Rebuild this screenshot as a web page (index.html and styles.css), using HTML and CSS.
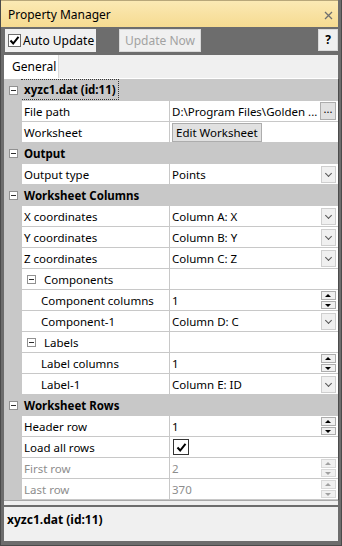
FILE: index.html
```html
<!DOCTYPE html>
<html>
<head>
<meta charset="utf-8">
<link rel="stylesheet" href="styles.css">
</head>
<body>
<div class="win">
  <div class="titlebar">
    <span class="title">Property Manager</span>
    <svg class="close" width="9" height="9" viewBox="0 0 9 9"><path d="M1 1L8 8M8 1L1 8" stroke="#6f6f6f" stroke-width="1.3"/></svg>
  </div>
  <div class="toolbar">
    <div class="tbtn auto"><span class="cb"><svg width="11" height="11" viewBox="0 0 11 11"><path d="M1.5 5.5L4.2 8.5L9.5 1.8" fill="none" stroke="#000" stroke-width="2"/></svg></span><span>Auto Update</span></div>
    <div class="tbtn disabled">Update Now</div>
    <div class="fill"></div>
    <div class="tbtn help">?</div>
  </div>
  <div class="tabs"><div class="tab">General</div></div>
  <div class="grid">
    <div class="row cat"><div class="gut"><span class="box"></span></div><div class="catlabel"><span class="focus">xyzc1.dat (id:11)</span></div></div>
    <div class="row"><div class="gut"></div><div class="lab">File path</div><div class="val"><span class="txt">D:\Program Files\Golden ...</span><span class="dots">...</span></div></div>
    <div class="row"><div class="gut"></div><div class="lab">Worksheet</div><div class="val"><span class="btn">Edit Worksheet</span></div></div>
    <div class="row cat"><div class="gut"><span class="box"></span></div><div class="catlabel">Output</div></div>
    <div class="row"><div class="gut"></div><div class="lab">Output type</div><div class="val"><span class="txt">Points</span><span class="dd"></span></div></div>
    <div class="row cat"><div class="gut"><span class="box"></span></div><div class="catlabel">Worksheet Columns</div></div>
    <div class="row"><div class="gut"></div><div class="lab">X coordinates</div><div class="val"><span class="txt">Column A: X</span><span class="dd"></span></div></div>
    <div class="row"><div class="gut"></div><div class="lab">Y coordinates</div><div class="val"><span class="txt">Column B: Y</span><span class="dd"></span></div></div>
    <div class="row"><div class="gut"></div><div class="lab">Z coordinates</div><div class="val"><span class="txt">Column C: Z</span><span class="dd"></span></div></div>
    <div class="row sub"><div class="gut"></div><div class="lab"><span class="box"></span>Components</div><div class="val"></div></div>
    <div class="row"><div class="gut"></div><div class="lab child">Component columns</div><div class="val"><span class="txt">1</span><span class="spin"><i class="up"></i><i class="dn"></i></span></div></div>
    <div class="row"><div class="gut"></div><div class="lab child">Component-1</div><div class="val"><span class="txt">Column D: C</span><span class="dd"></span></div></div>
    <div class="row sub"><div class="gut"></div><div class="lab"><span class="box"></span>Labels</div><div class="val"></div></div>
    <div class="row"><div class="gut"></div><div class="lab child">Label columns</div><div class="val"><span class="txt">1</span><span class="spin"><i class="up"></i><i class="dn"></i></span></div></div>
    <div class="row"><div class="gut"></div><div class="lab child">Label-1</div><div class="val"><span class="txt">Column E: ID</span><span class="dd"></span></div></div>
    <div class="row cat"><div class="gut"><span class="box"></span></div><div class="catlabel">Worksheet Rows</div></div>
    <div class="row"><div class="gut"></div><div class="lab">Header row</div><div class="val"><span class="txt">1</span><span class="spin"><i class="up"></i><i class="dn"></i></span></div></div>
    <div class="row"><div class="gut"></div><div class="lab">Load all rows</div><div class="val"><span class="cb2"><svg width="11" height="11" viewBox="0 0 11 11"><path d="M1.5 5.5L4.2 8.5L9.5 1.8" fill="none" stroke="#000" stroke-width="2"/></svg></span></div></div>
    <div class="row dis"><div class="gut"></div><div class="lab">First row</div><div class="val"><span class="txt">2</span><span class="spin off"><i class="up"></i><i class="dn"></i></span></div></div>
    <div class="row dis"><div class="gut"></div><div class="lab">Last row</div><div class="val"><span class="txt">370</span><span class="spin off"><i class="up"></i><i class="dn"></i></span></div></div>
  </div>
  <div class="splitter"></div>
  <div class="helppanel">xyzc1.dat (id:11)</div>
</div>
</body>
</html>
```
FILE: styles.css
```css
html, body {
  margin: 0;
  padding: 0;
  background: #6d6d6d;
}
body {
  font-family: "Noto Sans", "DejaVu Sans", sans-serif;
  font-size: 11.5px;
  color: #000;
}
.win {
  width: 342px;
  height: 546px;
  box-sizing: border-box;
  background: #6d6d6d;
  border: 1px solid #4a4a4a;
  border-top: none;
  display: flex;
  flex-direction: column;
  padding: 0 3px 4px 3px;
}
.titlebar {
  height: 27px;
  margin: 0 0 0 -3px;
  background: linear-gradient(#fbe9b4, #f6db91);
  display: flex;
  align-items: center;
  justify-content: space-between;
  padding: 0 5px 0 7px;
  border-top: 1px solid #b8a77a;
  box-sizing: border-box;
  font-size: 12px;
}
.title { line-height: 14px; padding-top: 1px; }
.close { margin-top: 3px; }
.toolbar {
  height: 28px;
  display: flex;
  align-items: flex-start;
  padding-top: 2px;
  box-sizing: border-box;
  font-size: 12px;
}
.tbtn {
  height: 23px;
  box-sizing: border-box;
  background: #f0f0f0;
  display: flex;
  align-items: center;
  line-height: 14px;
}
.auto {
  width: 91px;
  margin-left: 1px;
  padding-left: 3px;
}
.cb {
  width: 13px;
  height: 13px;
  box-sizing: border-box;
  border: 1px solid #6c6c6c;
  background: #fff;
  display: flex;
  align-items: center;
  justify-content: center;
  margin-right: 2px;
}
.disabled {
  margin-left: 23px;
  width: 82px;
  border: 1px solid #d9d9d9;
  color: #a2a2a2;
  justify-content: center;
}
.fill { flex: 1; }
.help {
  width: 20px;
  height: 22px;
  border: 1px solid #dadada;
  justify-content: center;
  font-weight: bold;
}
.tabs {
  height: 24px;
  background: #f0f0f0;
  border-bottom: 1px solid #ffffff;
  box-sizing: border-box;
  display: flex;
  font-size: 12px;
}
.tab {
  width: 55px;
  background: #fff;
  border-right: 1px solid #d9d9d9;
  box-sizing: border-box;
  padding-left: 8px;
  line-height: 23px;
}
.grid {
  background: #c8c8c8;
  padding-top: 1px;
  border-right: 1px solid #4b4b4b;
  margin-right: -1px;
}
.row {
  display: grid;
  grid-template-columns: 18px 147px 1fr;
  height: 20px;
  border-bottom: 1px solid #c8c8c8;
  line-height: 20px;
  white-space: nowrap;
}
.gut {
  background: #c8c8c8;
  position: relative;
}
.gut .box {
  position: absolute;
  left: 5px;
  top: 6px;
}
.box {
  display: inline-block;
  width: 9px;
  height: 9px;
  box-sizing: border-box;
  border: 1px solid #919191;
  background: #fff;
  position: relative;
}
.box::after {
  content: "";
  position: absolute;
  left: 1px;
  top: 3px;
  width: 5px;
  height: 1px;
  background: #2e2e2e;
}
.cat .catlabel {
  grid-column: 2 / 4;
  font-weight: bold;
  padding-left: 2px;
  padding-top: 1px;
  line-height: 19px;
}
.focus {
  outline: 1px dotted #333;
  margin-left: -2px;
  margin-top: -1px;
  padding: 1px 2px 0 2px;
  display: inline-block;
  height: 18px;
  line-height: 18px;
  vertical-align: top;
}
.lab {
  background: #fff;
  padding-left: 2px;
  padding-top: 1px;
  overflow: hidden;
  display: flex;
  align-items: center;
}
.lab.child { padding-left: 19px; }
.sub .lab .box { margin: 0 8px 0 3px; }
.val {
  background: #fff;
  border-left: 1px solid #c8c8c8;
  padding-left: 2px;
  display: flex;
  align-items: center;
  position: relative;
  overflow: hidden;
}
.txt { flex: 1; overflow: hidden; padding-top: 1px; }
.dis .lab, .dis .txt { color: #8d8d8d; }
.dots {
  width: 16px;
  height: 18px;
  box-sizing: border-box;
  margin-right: 2px;
  background: #e1e1e1;
  border: 1px solid #adadad;
  font-size: 11px;
  line-height: 12px;
  text-align: center;
}
.btn {
  height: 19px;
  box-sizing: border-box;
  background: #e1e1e1;
  border: 1px solid #adadad;
  padding: 0 3px;
  line-height: 17px;
  margin-top: 1px;
}
.dd {
  width: 15px;
  height: 17px;
  box-sizing: border-box;
  margin-right: 2px;
  border: 1px solid #cfcfcf;
  background: #f0f0f0;
  position: relative;
}
.dd::after {
  content: "";
  position: absolute;
  left: 4px;
  top: 4px;
  width: 4px;
  height: 4px;
  border-right: 1.5px solid #555;
  border-bottom: 1.5px solid #555;
  transform: rotate(45deg);
}
.spin {
  width: 15px;
  height: 18px;
  margin-right: 2px;
  display: flex;
  flex-direction: column;
  gap: 1px;
}
.spin i {
  flex: 1;
  border: 1px solid #adadad;
  background: #f0f0f0;
  position: relative;
}
.spin i::after {
  content: "";
  position: absolute;
  left: 3px;
  width: 0;
  height: 0;
  border-left: 3.5px solid transparent;
  border-right: 3.5px solid transparent;
}
.spin .up::after { top: 2px; border-bottom: 3px solid #000; }
.spin .dn::after { top: 2px; border-top: 3px solid #000; }
.spin.off i { border-color: #d8d8d8; }
.spin.off .up::after { border-bottom-color: #a0a0a0; }
.spin.off .dn::after { border-top-color: #a0a0a0; }
.cb2 {
  width: 16px;
  height: 16px;
  box-sizing: border-box;
  border: 1px solid #333;
  display: flex;
  align-items: center;
  justify-content: center;
  margin-left: 1px;
}
.splitter {
  height: 7px;
  background: #f0f0f0;
  border-top: 1px solid #a9a9a9;
  border-bottom: 2px solid #6d6d6d;
  box-sizing: border-box;
}
.helppanel {
  flex: 1;
  background: #f0f0f0;
  font-weight: bold;
  font-size: 12px;
  padding: 4px 0 0 3px;
}
```
